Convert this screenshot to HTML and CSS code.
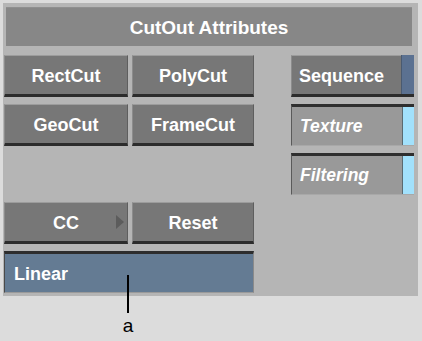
FILE: index.html
```html
<!DOCTYPE html>
<html>
<head>
<meta charset="utf-8">
<link rel="stylesheet" href="styles.css">
</head>
<body>
<div class="screen">
  <div class="panel">
    <div class="title">CutOut Attributes</div>
    <div class="grid">
      <div class="btn c1 r1">RectCut</div>
      <div class="btn c2 r1">PolyCut</div>
      <div class="btn seq c3 r1"><span class="lbl">Sequence</span><span class="strip dark"></span></div>
      <div class="btn c1 r2">GeoCut</div>
      <div class="btn c2 r2">FrameCut</div>
      <div class="field c3 r2"><span class="lbl">Texture</span><span class="strip light"></span></div>
      <div class="field c3 r3"><span class="lbl">Filtering</span><span class="strip light"></span></div>
      <div class="btn cc c1 r4">CC<span class="tri"></span></div>
      <div class="btn c2 r4">Reset</div>
      <div class="linear r5">Linear</div>
    </div>
  </div>
  <div class="callout"></div>
  <div class="callout-label">a</div>
</div>
</body>
</html>
```

FILE: styles.css
```css
html, body {
  margin: 0;
  padding: 0;
  background: #dcdcdc;
}
.screen {
  position: relative;
  width: 422px;
  height: 341px;
  padding: 3px 0 0 3px;
  box-sizing: border-box;
  background: #dcdcdc;
  font-family: "Liberation Sans", Arial, sans-serif;
}
.panel {
  width: 415px;
  height: 293px;
  background: #b5b5b5;
  padding: 4px 0 0 1px;
  box-sizing: border-box;
}
.title {
  margin-left: 2px;
  width: 406px;
  height: 39px;
  background: #878787;
  color: #fff;
  font-weight: bold;
  font-size: 19px;
  display: flex;
  align-items: center;
  justify-content: center;
  border-top: 1px solid #8f8f8f;
  padding-top: 2px;
  box-sizing: border-box;
}
.grid {
  margin-top: 9px;
  display: grid;
  grid-template-columns: 124px 4px 122px 37px 123px;
  grid-template-rows: repeat(5, 42px);
  row-gap: 7px;
}
.c1 { grid-column: 1; }
.c2 { grid-column: 3; }
.c3 { grid-column: 5; }
.r1 { grid-row: 1; }
.r2 { grid-row: 2; }
.r3 { grid-row: 3; }
.r4 { grid-row: 4; }
.r5 { grid-row: 5; }
.btn {
  position: relative;
  box-sizing: border-box;
  background: #777777;
  border-top: 1px solid #9c9c9c;
  border-left: 1px solid #8c8c8c;
  border-right: 1px solid #5e5e5e;
  border-bottom: 3px solid #2c2c2c;
  color: #fff;
  font-weight: bold;
  font-size: 18px;
  display: flex;
  align-items: center;
  justify-content: center;
  padding-top: 2px;
}
.btn.seq {
  justify-content: flex-start;
  align-items: stretch;
  border-right: none;
  padding-left: 7px;
  padding-top: 0;
}
.btn.seq .lbl {
  padding-top: 2px;
}
.lbl {
  flex: 1;
  display: flex;
  align-items: center;
}
.strip {
  width: 12px;
  flex: none;
}
.strip.dark {
  background: #5b7191;
  border-left: 1px solid #4a5a70;
  margin-top: -1px;
}
.field {
  box-sizing: border-box;
  background: #999999;
  border-top: 3px solid #2f2f2f;
  border-left: 1px solid #5a5a5a;
  border-bottom: 1px solid #a8a8a8;
  color: #fff;
  font-weight: bold;
  font-style: italic;
  font-size: 17.5px;
  display: flex;
  align-items: stretch;
  padding-left: 8px;
}
.strip.light {
  width: 11px;
  background: #a2e1fc;
  border-left: 1px solid #5b6a70;
}
.cc .tri {
  position: absolute;
  right: 3px;
  top: 12px;
  width: 0;
  height: 0;
  border-top: 7px solid transparent;
  border-bottom: 7px solid transparent;
  border-left: 8px solid #5c5c5c;
}
.linear {
  grid-column: 1 / 4;
  box-sizing: border-box;
  background: #647b93;
  border-top: 3px solid #2d2d2d;
  border-left: 1px solid #4a4a4a;
  border-bottom: 1px solid #9a9a9a;
  border-right: 1px solid #8a8a8a;
  color: #fff;
  font-weight: bold;
  font-size: 18px;
  display: flex;
  align-items: center;
  padding-left: 9px;
  padding-top: 3px;
}
.callout {
  position: absolute;
  left: 127px;
  top: 275px;
  width: 2px;
  height: 38px;
  background: #000;
}
.callout-label {
  position: absolute;
  left: 118px;
  top: 315px;
  width: 20px;
  text-align: center;
  font-size: 19px;
  color: #000;
}
```
